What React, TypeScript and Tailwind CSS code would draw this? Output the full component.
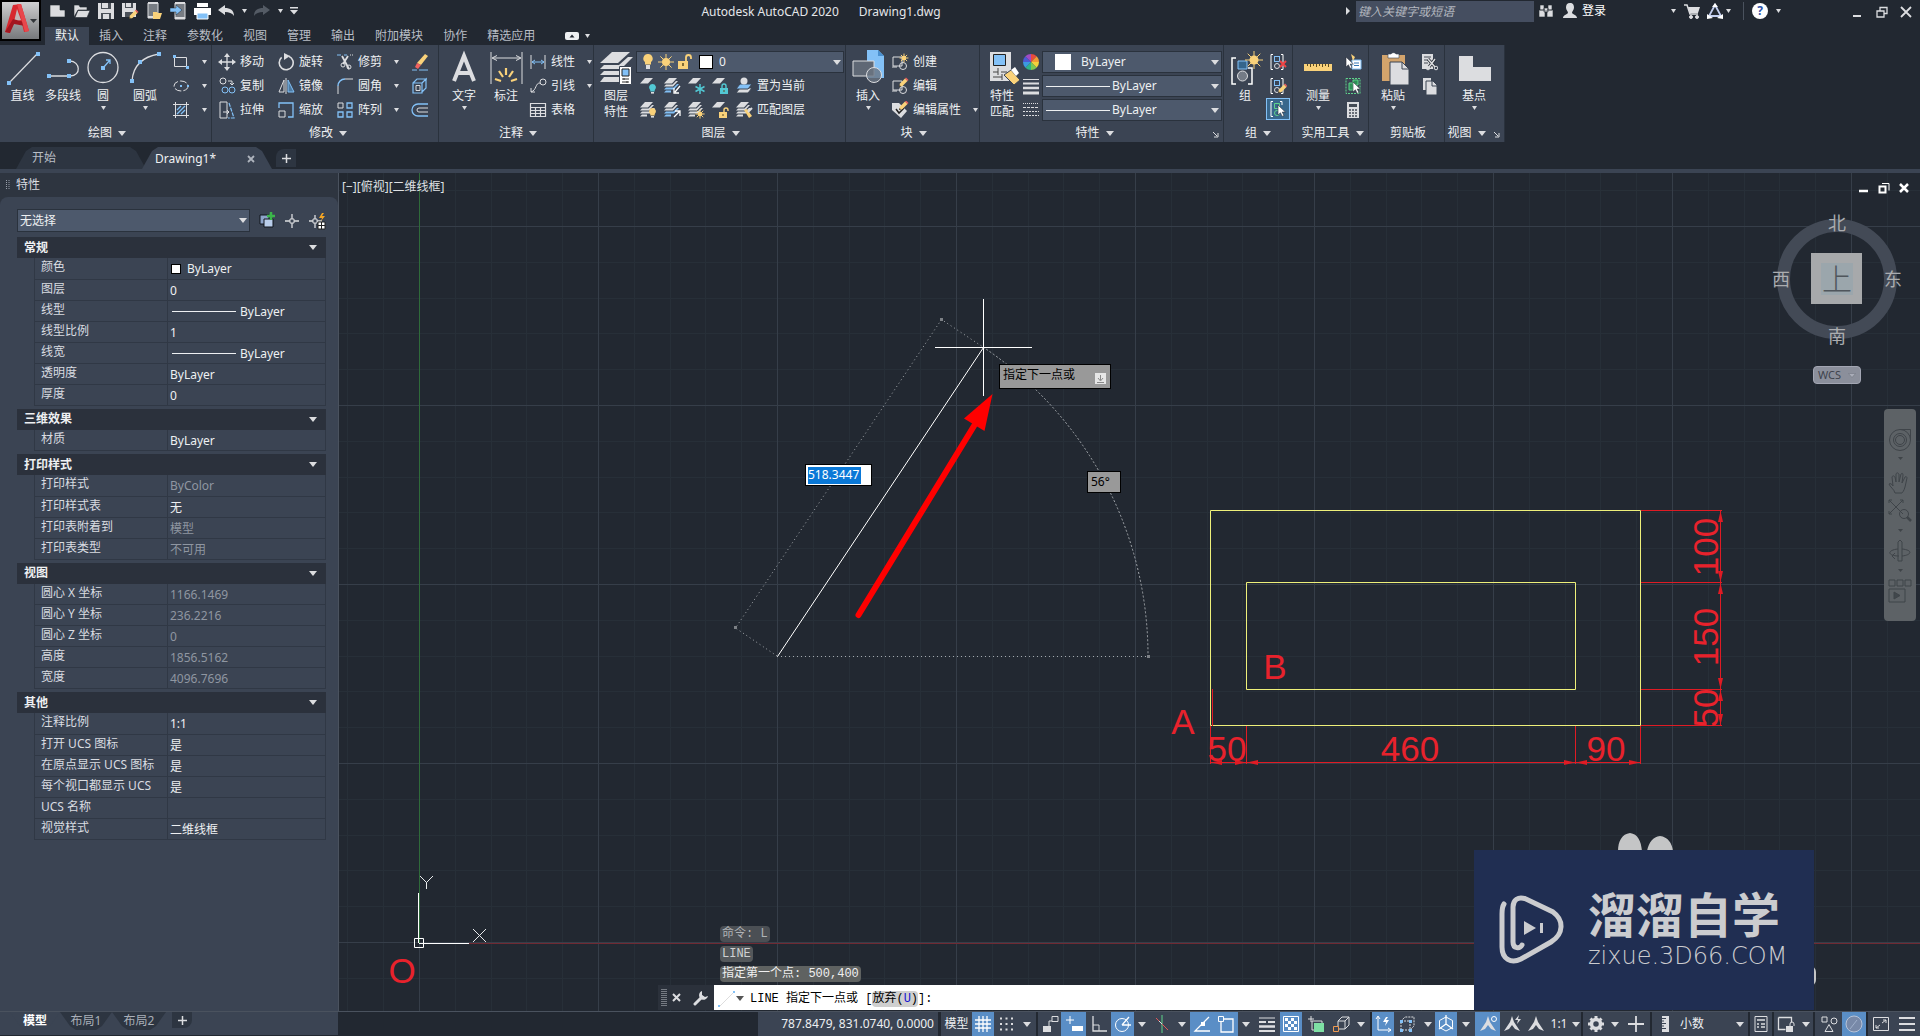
import type { ReactNode } from "react";

const W = "#dcdde0";
const B = "#83c1f7";
const Y = "#fad27a";
const G = "#5fd38b";
const BG = "#3b4453";

type IconProps = { w?: number; h?: number; children: ReactNode };

function Icon({ w = 18, h = 18, children }: IconProps) {
    return (
        <svg width={w} height={h} viewBox={`0 0 ${w} ${h}`} fill="none" stroke={W} className="shrink-0">
            {children}
        </svg>
    );
}

function Down({ small = false }: { small?: boolean }) {
    return small ? (
        <svg width="5" height="4" viewBox="0 0 5 4" className="shrink-0"><path d="M0 0h5L2.5 4z" fill={W} /></svg>
    ) : (
        <svg width="8" height="5" viewBox="0 0 8 5" className="shrink-0"><path d="M0 0h8L4 5z" fill={W} /></svg>
    );
}

/* ---------- shared icon parts ---------- */

function Sheets({ n = 3, low = W }: { n?: number; low?: string }) {
    return (
        <g stroke="none">
            <path d="M6 1h8L9 6.500H1z" fill={W} />
            {n > 1 && <path d="M1 9.500L3 7.500h6.500L13 4h2l-5 5.500z" fill={W} />}
            {n > 2 && <path d="M1 12.500l2-2h7.500L14 7h2l-5 5.500z" fill={low} />}
            {n > 2 && <path d="M1 15.500l2-2h5v2z" fill={low} />}
        </g>
    );
}

function Bulb({ x, y, c = Y }: { x: number; y: number; c?: string }) {
    return (
        <g stroke="none">
            <path d={`M${x} ${y}a3.5 3.5 0 0 1 2.2 6.2v1.3h-4.4v-1.3a3.5 3.5 0 0 1 2.2-6.2z`} fill={c} />
            <rect x={x - 1.5} y={y + 8} width="3" height="1.6" fill={W} />
        </g>
    );
}

function Sun({ x, y, r = 3, c = Y }: { x: number; y: number; r?: number; c?: string }) {
    const k = r * 2;
    const d = r * 1.4;
    return (
        <g stroke={c} strokeWidth="1">
            <circle cx={x} cy={y} r={r} fill={c} stroke="none" />
            <path d={`M${x - k} ${y}h${k * 2}M${x} ${y - k}v${k * 2}M${x - d} ${y - d}l${d * 2} ${d * 2}M${x + d} ${y - d}l${-d * 2} ${d * 2}`} />
        </g>
    );
}

function Lock({ x, y, c = Y, open = false }: { x: number; y: number; c?: string; open?: boolean }) {
    return (
        <g>
            <path d={open ? `M${x + 5} ${y}v-2a2 2 0 0 1 4 0v1` : `M${x + 2} ${y}v-2a2 2 0 0 1 4 0v2`} stroke={c} strokeWidth="1.4" />
            <rect x={x} y={y} width="8" height="6" fill={c} stroke="none" />
            <path d={`M${x + 4} ${y + 2}v2`} stroke="#5a4a20" />
        </g>
    );
}

function Pencil({ x, y }: { x: number; y: number }) {
    return (
        <g stroke="none">
            <path d={`M${x} ${y + 8}l1-3.5 5-5 2.5 2.5-5 5z`} fill={Y} />
            <path d={`M${x + 6} ${y - 0.5}l1-1 2.5 2.5-1 1z`} fill="#f0625f" />
            <path d={`M${x} ${y + 8}l.6-2 1.4 1.4z`} fill="#222" />
        </g>
    );
}

function Cursor({ x, y }: { x: number; y: number }) {
    return <path d={`M${x} ${y}v10l2.4-2.2 1.8 3.6 1.8-.9-1.8-3.4h3.2z`} fill="#fff" stroke="#2b313b" strokeWidth=".6" />;
}

function Squares({ pts }: { pts: number[][] }) {
    return <>{pts.map(([x, y]) => <rect key={`${x}-${y}`} x={x - 2} y={y - 2} width="4" height="4" fill={B} stroke="none" />)}</>;
}

/* ---------- ribbon building blocks ---------- */

function BigButton({ icon, label, arrow, className }: { icon: ReactNode; label: string[]; arrow?: boolean; className: string }) {
    return (
        <button className={`flex flex-col items-center ${className}`}>
            {icon}
            <span className="mt-0.5 flex flex-col leading-4">
                {label.map((l) => <span key={l}>{l}</span>)}
            </span>
            {arrow && <span className="mt-0.5"><Down small /></span>}
        </button>
    );
}

function Tool({ icon, label, arrow, name }: { icon: ReactNode; label?: string; arrow?: boolean; name?: string }) {
    return (
        <button className="flex h-6 items-center gap-1 whitespace-nowrap" aria-label={name}>
            {icon}
            {label}
            {arrow && <span className="ml-2"><Down small /></span>}
        </button>
    );
}

function Panel({ title, arrow = true, launcher, className, children }: { title: string; arrow?: boolean; launcher?: boolean; className: string; children: ReactNode }) {
    return (
        <section className={`flex shrink-0 flex-col border-r border-[#2a323d] bg-[#3b4453] ${className}`}>
            <div className="flex h-[77px] pt-[5px]">{children}</div>
            <button className={`relative flex h-5 items-center justify-center gap-1.5 pt-0.5 whitespace-nowrap ${launcher ? "pr-4" : ""}`}>
                {title}
                {arrow && <Down />}
                {launcher && (
                    <svg width="7" height="7" viewBox="0 0 7 7" className="absolute right-1 bottom-1" fill="none" stroke={W}><path d="M1 1l4 4M6 2v4H2" /></svg>
                )}
            </button>
        </section>
    );
}

function Combo({ name, value, before, className }: { name: string; value: string; before?: ReactNode; className: string }) {
    return (
        <div className={`flex items-center border border-[#2a323d] bg-[#4d596c] pr-0.5 ${className}`}>
            {before}
            <select aria-label={name} className="min-w-0 flex-1 appearance-none bg-transparent text-[#eef0f2] outline-none">
                <option>{value}</option>
            </select>
            <Down />
        </div>
    );
}

/* ---------- title bar ---------- */

const qat: { name: string; icon: ReactNode }[] = [
    { name: "新建", icon: <path d="M1 3h10l5 5v7H1z M11 3v5h5" fill={W} stroke="#222831" strokeWidth=".6" /> },
    { name: "打开", icon: <path d="M1 3h5l1 2h7v3H5l-4 7zM5 8.500h12l-3 7H2z" fill={W} stroke="#222831" strokeWidth=".6" /> },
    { name: "保存", icon: <><path d="M1 1h16v16H1z" fill={W} stroke="none" /><path d="M4 1h10v6H4zM4 11h10v6H4z" fill="#4a5058" stroke="none" /><path d="M5 1h6v5H5zM6 12h6v5H6z" fill={W} stroke="none" /></> },
    { name: "另存为", icon: <><path d="M1 1h14v14H1z" fill={W} stroke="none" /><path d="M4 1h8v5H4zM4 10h8v5H4z" fill="#4a5058" stroke="none" /><path d="M5 1h5v4H5z" fill={W} stroke="none" /><Pencil x={8} y={9} /></> },
    { name: "从移动设备打开", icon: <><path d="M3 1h10v15H3z" fill="#777c83" /><path d="M3 1h10M3 15h7" strokeWidth="2" /><path d="M8 10h4l1 1h4l-2 6H8z" fill={Y} stroke="none" /></> },
    { name: "保存到移动设备", icon: <><path d="M6 1h10v16H6z" fill="#777c83" /><path d="M6 1h10M6 16h10" strokeWidth="2" /><path d="M1 6h6V3l6 5-6 5v-3H1z" fill={B} stroke="#222831" strokeWidth=".5" /></> },
    { name: "打印", icon: <><path d="M4 1h11v4H4zM1 6h17v7H1z" fill="#fff" stroke="none" /><path d="M4 11h11v6H4z" fill={B} stroke="#fff" /></> },
    { name: "放弃", icon: <path d="M1 8l7-5v3c5 0 9 2 9 8-2-3-5-4-9-4v3z" fill={W} stroke="none" /> },
];

function TitleBar() {
    return (
        <header className="flex h-[45px] shrink-0">
            <button aria-label="应用程序" className="flex h-[41px] w-[41px] shrink-0 items-center border-2 border-black bg-linear-to-b from-[#cfcfd0] to-[#77797c]">
                <svg width="37" height="37" viewBox="0 0 37 37">
                    <path d="M3 30L11 3l8-1 8 27-5 1-2-8-6-2-5 5-1 6z" fill="#d7282f" />
                    <path d="M15 7l-3 13 7-2z" fill="#c2b5b6" />
                    <path d="M3 30l8-13 11 3 1 4-11-2-4 9z" fill="#a31620" />
                    <path d="M15 2l4 0 8 27-4 1z" fill="#e8474c" />
                    <path d="M28 17h7l-3.500 4z" fill="#33363a" />
                </svg>
            </button>
            <div className="flex min-w-0 flex-1 flex-col">
                <div className="flex h-[27px] pr-0.5">
                    <div className="flex h-[22px] items-center pl-[5px]">
                        {qat.map((q) => (
                            <button key={q.name} aria-label={q.name} className="flex w-6 justify-center"><Icon>{q.icon}</Icon></button>
                        ))}
                        <button aria-label="放弃列表" className="flex w-3 justify-center"><Down small /></button>
                        <button aria-label="重做" className="flex w-6 justify-center">
                            <Icon><path d="M17 8l-7-5v3C5 6 1 8 1 14c2-3 5-4 9-4v3z" fill="#545b65" stroke="none" /></Icon>
                        </button>
                        <button aria-label="重做列表" className="flex w-3 justify-center"><Down small /></button>
                        <button aria-label="自定义" className="flex w-4 justify-center">
                            <svg width="8" height="8" viewBox="0 0 8 8" fill={W}><path d="M0 0h8v1.500H0zM0 3h8L4 7.500z" /></svg>
                        </button>
                    </div>
                    <h1 className="flex h-6 flex-1 items-center justify-center gap-5 pr-1.5 text-xs text-[#e4e6e9]">
                        <span>Autodesk AutoCAD 2020</span>
                        <span>Drawing1.dwg</span>
                    </h1>
                    <div className="flex h-[22px] items-center">
                        <svg width="4" height="8" viewBox="0 0 4 8" className="mr-1.5"><path d="M0 0l4 4-4 4z" fill={W} /></svg>
                        <input aria-label="搜索" placeholder="键入关键字或短语" className="h-[21px] w-[178px] bg-[#454e60] px-0.5 text-xs italic outline-none placeholder:text-[#b3b7bf]" />
                        <button aria-label="查找" className="flex w-6 justify-center">
                            <Icon><path d="M3 3h4v5H3zM11 3h4v5h-4zM2 8h6v7H2zM10 8h6v7h-6zM7 6h4v4H7z" fill={W} stroke="#222831" strokeWidth=".6" /></Icon>
                        </button>
                        <button className="flex w-[118px] items-center text-xs text-white">
                            <span className="flex w-6 justify-center">
                                <Icon><path d="M9 1c3 0 4 2 4 4.500S11 9 11 11c1 1.500 5 2 5 5H2c0-3 4-3.500 5-5 0-2-2-3-2-5.500S6 1 9 1z" fill={W} stroke="none" /></Icon>
                            </span>
                            <span className="mr-auto">登录</span>
                            <Down small />
                        </button>
                        <button aria-label="购物车" className="ml-1 flex w-6 justify-center">
                            <Icon><path d="M1 3h3l3 9h8" strokeWidth="1.500" /><path d="M5 5h12l-2 6H7z" fill={W} stroke="none" /><circle cx="8" cy="15" r="1.500" fill={W} /><circle cx="14" cy="15" r="1.500" fill={W} /></Icon>
                        </button>
                        <button aria-label="Autodesk App Store" className="flex w-8 items-center gap-0.5 pl-0.5">
                            <Icon><path d="M9 3L3 14h12z" stroke="#c3cff0" strokeWidth="1.800" /><path d="M6 5l3-4 3 4zM1 12l6 4-6 1zM17 12l-6 4 6 1z" fill="#fff" stroke="none" /></Icon>
                            <Down small />
                        </button>
                        <span className="mr-2 ml-[7px] h-[18px] w-px bg-[#4a525e]" />
                        <button aria-label="帮助" className="flex items-center gap-2">
                            <span className="flex size-4 items-center justify-center rounded-full bg-white text-xs leading-4 font-bold text-[#2c51a8]">?</span>
                            <Down small />
                        </button>
                        <div className="ml-16 flex w-[73px] justify-between pt-0.5">
                            <button aria-label="最小化" className="flex w-6 justify-center"><Icon w={12} h={12}><path d="M2 10h8" strokeWidth="2" /></Icon></button>
                            <button aria-label="还原" className="flex w-6 justify-center"><Icon w={12} h={12}><path d="M1 5h7v6H1zM4 5V1.500h7v6H8" strokeWidth="1.300" /></Icon></button>
                            <button aria-label="关闭" className="flex w-6 justify-center"><Icon w={12} h={12}><path d="M1 1l10 10M11 1L1 11" strokeWidth="1.800" /></Icon></button>
                        </div>
                    </div>
                </div>
                <nav className="flex h-[18px] pl-1 text-xs leading-[18px] text-[#b9bec6]">
                    {["默认", "插入", "注释", "参数化", "视图", "管理", "输出", "附加模块", "协作", "精选应用"].map((t, i) => (
                        <button key={t} className={i === 0 ? "bg-[#3b4453] px-2.5 text-[#eef0f2]" : "px-2.5"}>{t}</button>
                    ))}
                    <button aria-label="最小化功能区" className="ml-5 flex items-center gap-1.5">
                        <svg width="14" height="8" viewBox="0 0 14 8"><rect width="14" height="8" rx="2" fill="#eef0f2" /><path d="M4.500 5.500h5l-2.500-3z" fill="#222831" /></svg>
                        <Down small />
                    </button>
                </nav>
            </div>
        </header>
    );
}

/* ---------- ribbon ---------- */

function DrawPanel() {
    return (
        <Panel title="绘图" className="w-[212px] pl-[3px]">
            <BigButton className="w-[39px]" label={["直线"]} icon={<Icon w={36} h={36}><path d="M4 33L32 4" strokeWidth="1.200" /><Squares pts={[[4, 33], [33, 4]]} /></Icon>} />
            <BigButton className="w-[42px]" label={["多段线"]} icon={<Icon w={36} h={36}><path d="M4 26h20M25 11c10 0 12 15 0 15" strokeWidth="1.300" /><Squares pts={[[4, 26], [24, 26], [24, 11]]} /></Icon>} />
            <BigButton className="w-[38px]" arrow label={["圆"]} icon={<Icon w={36} h={36}><circle cx="18" cy="17.500" r="15" strokeWidth="1.300" /><path d="M18 18l7-8M21 10h4v4" stroke={B} strokeWidth="1.300" /><Squares pts={[[18, 18]]} /></Icon>} />
            <BigButton className="w-[46px]" arrow label={["圆弧"]} icon={<Icon w={36} h={36}><path d="M5 31C6 17 14 7 32 4" strokeWidth="1.300" /><Squares pts={[[5, 31], [13, 12], [32, 4]]} /></Icon>} />
            <div className="ml-1">
                <Tool name="矩形" arrow icon={<Icon><path d="M2.500 4.500h12v9h-12z" /><rect x="1" y="2" width="3" height="3" fill={B} stroke="none" /><rect x="14" y="13" width="3" height="3" fill={B} stroke="none" /></Icon>} />
                <Tool name="椭圆" arrow icon={<Icon><ellipse cx="9" cy="9" rx="7" ry="5" strokeDasharray="7 2" /><rect x="8" y="8" width="2" height="2" fill={B} stroke="none" /><rect x="15" y="8" width="2" height="2" fill={B} stroke="none" /></Icon>} />
                <Tool name="图案填充" arrow icon={<Icon><path d="M3.500 1v16M14.500 1v16M1 3.500h16M1 14.500h16" /><path d="M5 9l4-4M5 13l8-8M9 13l4-4" stroke={B} strokeWidth="1.300" /></Icon>} />
            </div>
        </Panel>
    );
}

function ModifyPanel() {
    return (
        <Panel title="修改" className="w-[227px] pl-1.5">
            <div className="w-[59px]">
                <Tool label="移动" icon={<Icon><path d="M9 2v14M2 9h14" strokeWidth="1.300" /><path d="M9 0l3 4H6zM9 18l3-4H6zM0 9l4-3v6zM18 9l-4-3v6z" fill={W} stroke="none" /></Icon>} />
                <Tool label="复制" icon={<Icon><circle cx="5" cy="4" r="3" /><path d="M10 4h4v4M12 6l2 2 2-2" /><circle cx="7" cy="13" r="3" stroke={B} /><circle cx="14" cy="13" r="3" stroke={B} /></Icon>} />
                <Tool label="拉伸" icon={<Icon><path d="M2 1h7v16H2zM5 11h6M9 9l2 2-2 2" /><path d="M11 2l5 15h-6" stroke={B} strokeWidth="1.200" strokeDasharray="4 1" /></Icon>} />
            </div>
            <div className="w-[59px]">
                <Tool label="旋转" icon={<Icon><path d="M14 5A7 7 0 1 1 7 3" strokeWidth="1.600" transform="rotate(-25 9 9)" /><path d="M7 0l6 3-6 4z" fill={W} stroke="none" /></Icon>} />
                <Tool label="镜像" icon={<Icon><path d="M7 3v12H2z" /><path d="M11 3v12h6z" stroke={B} fill="#4d7ba3" /><path d="M9 1v16" /></Icon>} />
                <Tool label="缩放" icon={<Icon><path d="M2 10h6v6H2z" /><path d="M2 7V2h14v14h-5" stroke={B} strokeWidth="1.300" /></Icon>} />
            </div>
            <div className="w-[75px]">
                <Tool label="修剪" arrow icon={<Icon><path d="M1 2h4M8 2h3" stroke={B} /><path d="M14 2h3" strokeDasharray="1" /><path d="M6 3l7 13M12 3l-5 8" strokeWidth="1.800" /><circle cx="13" cy="14" r="2" /><circle cx="7" cy="12" r="2" /></Icon>} />
                <Tool label="圆角" arrow icon={<Icon><path d="M2 9c0-4 3-7 7-7" stroke={B} strokeWidth="1.500" /><path d="M2 17V9M9 2h8" /></Icon>} />
                <Tool label="阵列" arrow icon={<Icon><path d="M2 2h5v5H2z" /><path d="M11 2h5v5h-5zM2 11h5v5H2zM11 11h5v5h-5z" stroke={B} strokeWidth="1.300" /></Icon>} />
            </div>
            <div>
                <Tool name="删除" icon={<Icon><path d="M1 17h5M8 17h9" stroke={B} /><path d="M6 10l8-9 3 2-7 9z" fill={Y} stroke="none" /><path d="M6 10l4 2-3 4-3-2z" fill="#f0625f" stroke="none" /></Icon>} />
                <Tool name="分解" icon={<Icon><path d="M2 6h9v10H2zM2 6l4-4h10M11 6l4-4v9l-4 4" stroke={B} strokeWidth="1.200" /><path d="M5 8.500h4v5H5z" /></Icon>} />
                <Tool name="偏移" icon={<Icon><path d="M17 3H7a6 6 0 0 0 0 12h10" stroke={B} strokeWidth="1.300" /><path d="M17 7H8a2 2 0 0 0 0 4h9" /></Icon>} />
            </div>
        </Panel>
    );
}

function AnnotatePanel() {
    return (
        <Panel title="注释" className="w-[155px] pl-1">
            <BigButton className="w-[42px]" arrow label={["文字"]} icon={<Icon w={36} h={36}><path d="M8 31L18 6l10 25M12 23h12" strokeWidth="4" /></Icon>} />
            <BigButton className="w-[42px]" label={["标注"]} icon={<Icon w={36} h={36}><path d="M3 2v32M34 2v32M5 8h27M9 5.500L4 8l5 2.500M28 5.500L33 8l-5 2.500" /><path d="M18 18v7M11 21l4 6M25 21l-4 6M7 29l6 2M29 29l-6 2" stroke={Y} strokeWidth="2.200" /></Icon>} />
            <div className="ml-0.5">
                <Tool label="线性" arrow icon={<Icon><path d="M2 2v14M16 2v14" /><path d="M3 9h12M6 7L3 9l3 2M12 7l3 2-3 2" stroke={B} /></Icon>} />
                <Tool label="引线" arrow icon={<Icon><circle cx="14" cy="5" r="3" /><path d="M11 6c-5 0-3 7-9 9M2 11v4h4" /></Icon>} />
                <Tool label="表格" icon={<Icon><path d="M1.500 2.500h15v13h-15zM1.500 6.500h15M1.500 9.500h15M1.500 12.500h15M6.500 6v9M11.500 6v9" strokeWidth="1.200" /></Icon>} />
            </div>
        </Panel>
    );
}

const cyan = "#52c8d4";

const layerTools: { name: string; icon: ReactNode }[][] = [
    [
        { name: "关", icon: <><Sheets n={1} /><Bulb x={13.5} y={7} c={cyan} /></> },
        { name: "隔离", icon: <><Sheets low={B} /><path d="M17 9l-5 6M11 11v5h5" stroke="#fff" strokeWidth="1.300" /></> },
        { name: "冻结", icon: <><Sheets n={1} /><path d="M13 7v10M8.500 9.500l9 5M17.500 9.500l-9 5" stroke={cyan} strokeWidth="1.500" /></> },
        { name: "锁定", icon: <><Sheets n={1} /><Lock x={9} y={11} c={cyan} /></> },
    ],
    [
        { name: "打开所有图层", icon: <><Sheets /><Bulb x={13.5} y={7} /></> },
        { name: "取消隔离", icon: <><Sheets low={B} /><path d="M11 16l6-6M12 10h5v5" stroke="#fff" strokeWidth="1.300" /></> },
        { name: "解冻", icon: <><Sheets /><Sun x={13} y={13} r={2.3} /></> },
        { name: "解锁", icon: <><Sheets n={1} /><Lock x={8} y={11} open /></> },
    ],
];

function LayerPanel() {
    return (
        <Panel title="图层" className="w-[252px] pl-0.5">
            <BigButton
                className="w-10"
                label={["图层", "特性"]}
                icon={
                    <Icon w={36} h={36}>
                        <g stroke="none" fill={W}>
                            <path d="M14 2h18L20 13H2z" />
                            <path d="M2 19l4-4h15l9-8h5L23 19z" />
                            <path d="M2 25l4-4h17v4z" />
                            <path d="M2 32l4-5h17v5z" />
                        </g>
                        <path d="M21.500 16.500h12v18h-12z" fill="#fff" stroke="#3b4453" />
                        <path d="M24 19h7v7h-7z" fill={B} stroke="#222" />
                        <path d="M24 29h7M24 32h7M26 28v2M29 31v2" stroke="#333" />
                    </Icon>
                }
            />
            <div className="w-[208px]">
                <div className="flex h-6 items-center">
                    <Combo
                        name="图层"
                        value="0"
                        className="h-[22px] w-full"
                        before={
                            <span className="flex items-center pr-1.5 pl-0.5">
                                <Icon><path d="M9 1a4.500 4.500 0 0 1 3 8v2.500H6V9a4.500 4.500 0 0 1 3-8z" fill={Y} stroke="none" /><path d="M7 12h4v4H7z" fill={W} stroke="none" /></Icon>
                                <Icon><Sun x={9} y={9} r={4} /></Icon>
                                <Icon><path d="M11 8V4.500a2.500 2.500 0 0 1 5 0V6" stroke={Y} strokeWidth="1.800" /><path d="M3 8h10v8H3z" fill={Y} stroke="none" /><path d="M8 10v3" stroke="#5a4a20" strokeWidth="1.500" /></Icon>
                                <span className="ml-1.5 size-[14px] border border-black bg-white" />
                            </span>
                        }
                    />
                </div>
                {layerTools.map((row, r) => (
                    <div key={r} className="flex h-6 items-center">
                        {row.map((t) => (
                            <button key={t.name} aria-label={t.name} className="flex w-6 justify-center"><Icon>{t.icon}</Icon></button>
                        ))}
                        <span className="ml-[3px]">
                            {r === 0
                                ? <Tool label="置为当前" icon={<Icon><path d="M5 11h12l-4 5H1z" fill={W} stroke={BG} /><path d="M5 7h12l-4 5H1z" fill={B} stroke={BG} /><circle cx="9" cy="4" r="3.500" fill={W} stroke="none" /></Icon>} />
                                : <Tool label="匹配图层" icon={<Icon><Sheets /><path d="M9 9l3-1 5 7-3 2z" fill={Y} stroke="none" /><path d="M13 11l4-4" strokeWidth="2" /></Icon>} />}
                        </span>
                    </div>
                ))}
            </div>
        </Panel>
    );
}

function BlockPanel() {
    return (
        <Panel title="块" className="w-[134px] pl-0.5">
            <BigButton
                className="w-10"
                arrow
                label={["插入"]}
                icon={
                    <Icon w={36} h={36}>
                        <path d="M17 0h11l6 6v22H17z" fill={B} stroke="none" />
                        <path d="M28 0v6h6z" fill="#4a90cf" stroke="none" />
                        <path d="M3 11h21v15H3z" fill="#5f6875" />
                        <circle cx="24" cy="25" r="7.500" fill="#6a7482" fillOpacity=".8" />
                    </Icon>
                }
            />
            <div className="ml-[3px]">
                <Tool label="创建" icon={<Icon><path d="M2 4h9v9H2zM1 14h5" /><circle cx="12" cy="13" r="3.500" /><Sun x={13} y={5} r={2.2} /></Icon>} />
                <Tool label="编辑" icon={<Icon><path d="M2 4h9v9H2zM1 14h5" /><circle cx="12" cy="13" r="3.500" /><Pencil x={8} y={2} /></Icon>} />
                <Tool label="编辑属性" arrow icon={<Icon><path d="M1 2h7l8 8-6 7-9-8z" fill={W} stroke="none" /><path d="M5 8l3 4 5-5" stroke="#222" strokeWidth="1.500" /><Pencil x={8} y={1} /></Icon>} />
            </div>
        </Panel>
    );
}

function PropPanel() {
    const line = <span className="mr-0.5 ml-[3px] h-px w-16 shrink-0 bg-[#eef0f2]" />;
    return (
        <Panel title="特性" launcher className="w-[244px] pl-0.5">
            <BigButton
                className="w-10"
                label={["特性", "匹配"]}
                icon={
                    <Icon w={36} h={36}>
                        <path d="M6 2h21v29H6z" fill={W} stroke="none" />
                        <path d="M9.500 4.500h12v11h-12z" fill={B} stroke="#222" />
                        <path d="M9 22h5M17 22h6M9 27h9M14 18v7M18 24v6" stroke="#444" />
                        <path d="M20 25l7-5 9 10-6 5z" fill={Y} stroke="#3b4453" />
                        <path d="M27 20l4-3 4 6-3 3z" fill="#fff" stroke="none" />
                    </Icon>
                }
            />
            <div className="w-5">
                <Tool name="颜色" icon={
                    <svg width="18" height="18" viewBox="0 0 18 18">
                        {["#e94b3c", "#f39c34", "#f2d13c", "#7ec850", "#2fb38a", "#3c9ae0", "#4c5bd4", "#a04bc4"].map((c, i) => (
                            <path key={c} d="M9 9L9 1A8 8 0 0 1 14.660 3.340z" fill={c} transform={`rotate(${i * 45} 9 9)`} />
                        ))}
                    </svg>
                } />
                <Tool name="线宽" icon={<Icon><path d="M1 2.500h16" /><path d="M1 6.500h16" strokeWidth="2" /><path d="M1 11h16" strokeWidth="2.500" /><path d="M1 16h16" strokeWidth="3" /></Icon>} />
                <Tool name="线型" icon={<Icon><path d="M1 2.500h16" strokeDasharray="1 1" /><path d="M1 6.500h16" strokeDasharray="3 1" /><path d="M1 10.500h16M1 14.500h16" strokeDasharray="2 1" /></Icon>} />
            </div>
            <div className="flex w-[180px] flex-col gap-0.5 pt-px">
                <Combo name="对象颜色" value="ByLayer" className="h-[22px]" before={<span className="mr-2.5 ml-3 size-4 shrink-0 bg-white" />} />
                <Combo name="对象线宽" value="ByLayer" className="h-[22px]" before={line} />
                <Combo name="对象线型" value="ByLayer" className="h-[22px]" before={line} />
            </div>
        </Panel>
    );
}

function Ribbon() {
    const group = (
        <>
            <path d="M4 1.500H2v15h2M12 1.500h2v15h-2" stroke="#fff" />
            <rect x="5.500" y="3.500" width="5" height="5" stroke={B} />
            <circle cx="8" cy="13" r="2.500" />
        </>
    );
    return (
        <div className="flex h-[97px] shrink-0 text-xs text-[#eef0f2]">
            <DrawPanel />
            <ModifyPanel />
            <AnnotatePanel />
            <LayerPanel />
            <BlockPanel />
            <PropPanel />
            <Panel title="组" className="w-[69px]">
                <BigButton className="w-[42px]" label={["组"]} icon={<Icon w={36} h={36}><path d="M9 8H5v26h4M21 18h4v16h-4" stroke="#fff" strokeWidth="1.500" /><path d="M11 11h9v8h-9z" fill="#34658c" stroke={B} /><circle cx="15.500" cy="26" r="5" fill="#747b86" /><Sun x={27} y={10} r={4.5} /></Icon>} />
                <div className="flex flex-col">
                    <span className="px-[3px]"><Tool name="解除编组" icon={<Icon>{group}<path d="M11 8l6 6M17 8l-6 6" stroke="#ef4444" strokeWidth="2" /></Icon>} /></span>
                    <span className="px-[3px]"><Tool name="组编辑" icon={<Icon>{group}<Pencil x={9} y={8} /></Icon>} /></span>
                    <span className="flex h-[22px] items-center border border-[#83c1f7] bg-[#39678c] px-0.5"><Tool name="启用组选择" icon={<Icon><path d="M4 1.500H2v15h2M11 1.500h2V5" stroke="#fff" /><path d="M5.500 3.500h5v5h-5z" stroke={G} /><circle cx="8" cy="13" r="2.500" stroke={G} /><Cursor x={9} y={5} /></Icon>} /></span>
                </div>
            </Panel>
            <Panel title="实用工具" className="w-[76px] pl-1">
                <BigButton className="w-[42px]" arrow label={["测量"]} icon={<Icon w={36} h={36}><path d="M4 14h28v7H4z" fill={Y} stroke="none" /><path d="M7.500 14v2M10.500 14v3M13.500 14v2M16.500 14v3M19.500 14v2M22.500 14v3M25.500 14v2M28.500 14v3" stroke="#5a4a20" /></Icon>} />
                <div className="ml-[5px]">
                    <Tool name="快速选择" icon={<Icon><path d="M8 7h9v9H8z" fill="#fff" stroke={B} /><path d="M10 10h5M10 12.500h5" stroke="#3577b5" /><path d="M7 1l4 3-2 4z" fill={Y} stroke="none" /><Cursor x={2} y={4} /></Icon>} />
                    <Tool name="全部选择" icon={<Icon><path d="M2 1.500h14v15H2z" stroke={G} strokeDasharray="2 1" /><path d="M5 6h4v7H5zM9 3h5v5H9z" fill="#2f8f57" stroke={G} /><Cursor x={9} y={5} /></Icon>} />
                    <Tool name="计算器" icon={<Icon><path d="M3 1h12v16H3z" fill={W} stroke="none" /><path d="M5 3h8v3H5z" fill="#444b55" stroke="none" /><path d="M5 9h8M5 12h8M5 15h8" stroke="#444b55" strokeWidth="1.600" strokeDasharray="2 1" /></Icon>} />
                </div>
            </Panel>
            <Panel title="剪贴板" arrow={false} className="w-[76px] pl-[3px]">
                <BigButton className="w-[42px]" arrow label={["粘贴"]} icon={<Icon w={36} h={36}><path d="M7 5h23v26H7z" fill="#d3a46c" stroke="none" /><path d="M13 4h3a3 3 0 0 1 5 0h3v4H13z" fill="#fff" stroke={BG} strokeWidth=".6" /><path d="M15 12h12l7 7v16H15z" fill={W} stroke={BG} /><path d="M27 12v7h7" stroke={BG} /></Icon>} />
                <div className="ml-1.5">
                    <Tool name="剪切" icon={<Icon><path d="M2 1h11v15H2z" fill={W} stroke="none" /><path d="M4 4h7M4 7h5M4 10h4" stroke="#444b55" /><path d="M8 6l7 8M15 6l-6 8" stroke="#222831" strokeWidth="3" /><path d="M8 6l7 8M15 6l-6 8" strokeWidth="1.500" /><circle cx="8" cy="15" r="1.800" /><circle cx="16" cy="15" r="1.800" /></Icon>} />
                    <Tool name="复制剪裁" icon={<Icon><path d="M3 1h8v12H3z" fill={W} stroke="none" /><path d="M6 4h7l4 4v10H6z" fill={W} stroke={BG} /><path d="M12 4v5h5" stroke={BG} /></Icon>} />
                </div>
            </Panel>
            <Panel title="视图" launcher className="w-[60px]">
                <BigButton className="ml-2 w-[42px]" arrow label={["基点"]} icon={<Icon w={36} h={36}><path d="M3 6h14v11h18v14H3z" fill={W} stroke="none" /></Icon>} />
            </Panel>
        </div>
    );
}

/* ---------- drawing file tabs ---------- */

const tabShape = "[clip-path:polygon(0_100%,10px_4px,16px_0,calc(100%-16px)_0,calc(100%-10px)_4px,100%_100%)]";
const tabShapeDown = "[clip-path:polygon(0_0,10px_calc(100%-4px),16px_100%,calc(100%-16px)_100%,calc(100%-10px)_calc(100%-4px),100%_0)]";

function FileTabs() {
    return (
        <div className="flex h-[31px] shrink-0 border-b-4 border-[#3b4453] pt-[5px] pl-4 text-xs text-[#b9bec6]">
            <button className={`h-[22px] w-[130px] bg-[#2d3541] pl-4 text-left ${tabShape}`}>开始</button>
            <div className={`-ml-1 flex h-[22px] w-[130px] items-center bg-[#3b4453] pt-0.5 pr-[17px] pl-[13px] text-[#eef0f2] ${tabShape}`}>
                <button className="mr-auto">Drawing1*</button>
                <button aria-label="关闭图形"><Icon w={8} h={8}><path d="M1 1l6 6M7 1L1 7" stroke="#aeb4bd" strokeWidth="1.800" /></Icon></button>
            </div>
            <button aria-label="新图形" className="ml-1 flex h-[18px] w-5 items-center justify-center rounded-tl-lg self-center bg-[#2d3541]">
                <Icon w={9} h={9}><path d="M4.500 0v9M0 4.500h9" strokeWidth="1.500" /></Icon>
            </button>
        </div>
    );
}

/* ---------- properties palette ---------- */

type Row = { label: string; value: string; dim?: boolean; before?: "swatch" | "line" };

const sections: { title: string; rows: Row[] }[] = [
    {
        title: "常规",
        rows: [
            { label: "颜色", value: "ByLayer", before: "swatch" },
            { label: "图层", value: "0" },
            { label: "线型", value: "ByLayer", before: "line" },
            { label: "线型比例", value: "1" },
            { label: "线宽", value: "ByLayer", before: "line" },
            { label: "透明度", value: "ByLayer" },
            { label: "厚度", value: "0" },
        ],
    },
    { title: "三维效果", rows: [{ label: "材质", value: "ByLayer" }] },
    {
        title: "打印样式",
        rows: [
            { label: "打印样式", value: "ByColor", dim: true },
            { label: "打印样式表", value: "无" },
            { label: "打印表附着到", value: "模型", dim: true },
            { label: "打印表类型", value: "不可用", dim: true },
        ],
    },
    {
        title: "视图",
        rows: [
            { label: "圆心 X 坐标", value: "1166.1469", dim: true },
            { label: "圆心 Y 坐标", value: "236.2216", dim: true },
            { label: "圆心 Z 坐标", value: "0", dim: true },
            { label: "高度", value: "1856.5162", dim: true },
            { label: "宽度", value: "4096.7696", dim: true },
        ],
    },
    {
        title: "其他",
        rows: [
            { label: "注释比例", value: "1:1" },
            { label: "打开 UCS 图标", value: "是" },
            { label: "在原点显示 UCS 图标", value: "是" },
            { label: "每个视口都显示 UCS", value: "是" },
            { label: "UCS 名称", value: "" },
            { label: "视觉样式", value: "二维线框" },
        ],
    },
];

function Properties() {
    return (
        <aside className="w-[339px] shrink-0 border-r border-[#4a525e] bg-[#2e3540] text-xs text-[#d9dce1]">
            <h2 className="flex h-6 items-center gap-1.5 pl-1.5">
                <svg width="4" height="10" viewBox="0 0 4 10"><path d="M.500 0v10M3 0v10" stroke="#9aa1ac" strokeDasharray="1 1" /></svg>
                特性
            </h2>
            <div className="h-full rounded-t-lg bg-[#3b4453] pt-3 pr-3 pl-[17px]">
                <div className="mb-[5px] flex items-center">
                    <Combo name="选择对象" value="无选择" className="h-[23px] w-[238px] pl-0.5" />
                    <button aria-label="切换 PICKADD" className="ml-2"><Icon><path d="M2 3h9v9H2z" fill="#8da4c9" stroke="#10151c" /><path d="M6 7h9v8H6z" fill="#b9cdea" stroke="#10151c" /><path d="M13 0v8M9 4h8" stroke="#3bb54a" strokeWidth="2.500" /></Icon></button>
                    <button aria-label="选择对象" className="ml-[7px]"><Icon><path d="M9 2v14M2 9h14" strokeWidth="1.300" /><path d="M7 7h4v4H7z" fill={BG} /></Icon></button>
                    <button aria-label="快速选择" className="ml-[7px]"><Icon><path d="M7 3v13M1 9h13" strokeWidth="1.300" /><path d="M5 7h4v4H5z" fill={BG} /><path d="M14 1l-3 5h3l-1 3 4-5h-3l2-3z" fill="#f6a623" stroke="none" /><path d="M10 10h7v7h-7z" fill="#fff" stroke="#222" /><path d="M10 13.500h7M13.500 10v7" stroke="#222" /></Icon></button>
                </div>
                {sections.map((s) => (
                    <section key={s.title} className="mb-[3px]">
                        <button className="flex h-[21px] w-full items-center justify-between bg-[#2b313c] pr-[9px] pl-[7px] font-bold text-[#eef0f2]">
                            {s.title}
                            <Down />
                        </button>
                        <div className="pl-[17px]">
                            <table className="w-full table-fixed">
                                <tbody>
                                    {s.rows.map((r) => (
                                        <tr key={r.label} className="h-[21px] border border-t-0 border-[#303845]">
                                            <th className="w-[133px] border-r border-[#303845] pb-0.5 pl-1.5 text-left leading-4 font-normal whitespace-nowrap">{r.label}</th>
                                            <td className={`pl-0.5 leading-4 ${r.dim ? "text-[#8f96a1]" : "text-[#eef0f2]"}`}>
                                                <span className="flex items-center pt-0.5">
                                                    {r.before === "swatch" && <span className="mr-1.5 ml-px size-[10px] border border-black bg-white" />}
                                                    {r.before === "line" && <span className="mr-1 ml-0.5 h-px w-16 bg-[#eef0f2]" />}
                                                    {r.value}
                                                </span>
                                            </td>
                                        </tr>
                                    ))}
                                </tbody>
                            </table>
                        </div>
                    </section>
                ))}
            </div>
        </aside>
    );
}

/* ---------- model space ---------- */

function Drawing() {
    const right = (x: number, y: number) => `M${x} ${y}l-11 -2.500v5z`;
    const left = (x: number, y: number) => `M${x} ${y}l11 -2.500v5z`;
    const up = (x: number, y: number) => `M${x} ${y}l-2.500 11h5z`;
    const down = (x: number, y: number) => `M${x} ${y}l-2.500 -11h5z`;
    return (
        <svg className="absolute inset-0 h-full w-full" fill="none">
            <defs>
                <pattern id="major" x="80" y="53" width="179" height="179" patternUnits="userSpaceOnUse">
                    <path d="M36.500 0v179M72.500 0v179M107.500 0v179M143.500 0v179M0 36.500h179M0 72.500h179M0 107.500h179M0 143.500h179" stroke="#272f38" />
                    <path d="M.500 0v179M0 .500h179" stroke="#363e49" />
                </pattern>
            </defs>
            <rect width="100%" height="100%" fill="url(#major)" />
            <g transform="translate(-339 -173)">
                <path d="M419.500 173v770" stroke="#2f6b3a" />
                <path d="M419 943.500h3000" stroke="#702a33" />
                <path d="M418.500 893v50M419 943.500h50" stroke="#fff" />
                <path d="M414.500 938.500h9v9h-9z" stroke="#fff" />
                <path d="M420 876l6.500 6.500 6.500 -6.500M426.500 882v7M473 929l13 13M486 929l-13 13" stroke="#e8eaec" />

                <g stroke="#a4a8ad" strokeDasharray="1 3">
                    <path d="M777 656L735.500 628L941.500 319.500L983 347" />
                    <path d="M777 656.500H1148" />
                    <path d="M983 347A371 371 0 0 1 1148 656" strokeDasharray="2 2" />
                </g>
                <path d="M734 626h3v3h-3zM940 318h3v3h-3zM1147 655h3v3h-3z" fill="#7d8186" />
                <path d="M777.500 656.500L983.500 347.500" stroke="#fff" />
                <path d="M935 347.500h97M983.500 299v97" stroke="#fff" />

                <path d="M858.500 615L977 421" stroke="#f00" strokeWidth="6" strokeLinecap="round" />
                <path d="M992.500 394L964 418.500L984.500 431z" fill="#f00" />

                <path d="M1210.500 510.500h430v215h-430zM1246.500 582.500h329v107h-329z" stroke="#eef07a" />
                <g stroke="#e01b24">
                    <path d="M1641 510.500h81M1641 582.500h81M1641 689.500h81M1641 725.500h81M1720.500 510v216" />
                    <path d="M1210.500 726v38M1246.500 726v38M1575.500 726v38M1640.500 726v38M1210 762.500h431M1212.500 689v37" />
                </g>
                <path
                    fill="#e01b24"
                    d={[
                        up(1720.5, 511), down(1720.5, 582), up(1720.5, 583), down(1720.5, 689), up(1720.5, 690), down(1720.5, 725),
                        left(1211, 762.5), right(1246, 762.5), left(1247, 762.5), right(1575, 762.5), left(1576, 762.5), right(1640, 762.5),
                    ].join("")}
                />
                <g fill="#e8222c" className="font-['Liberation_Sans',Arial,sans-serif] text-[35px]" textAnchor="middle">
                    <text x="1183" y="734">A</text>
                    <text x="1275" y="679">B</text>
                    <text x="402" y="983">O</text>
                    <text x="1227" y="761">50</text>
                    <text x="1410" y="761">460</text>
                    <text x="1606" y="761">90</text>
                    <text transform="translate(1718 547) rotate(-90)">100</text>
                    <text transform="translate(1718 637) rotate(-90)">150</text>
                    <text transform="translate(1718 708) rotate(-90)">50</text>
                </g>
            </g>
        </svg>
    );
}

function ViewCube() {
    return (
        <div className="absolute top-[29px] right-4 flex w-[134px] flex-col items-center">
            <svg width="134" height="154" viewBox="0 -10 134 154">
                <circle cx="67" cy="67" r="53.500" stroke="#434a56" strokeWidth="13" fill="none" />
                <rect x="41" y="41" width="51" height="51" fill="#a7a9ab" />
                <rect x="51" y="51" width="32" height="32" fill="#9ba6ac" />
                <g className="font-['Noto_Sans_CJK_SC',sans-serif]" textAnchor="middle">
                    <text x="67" y="78" fontSize="30" fill="#50565c" className="font-light">上</text>
                    <g fill="#abadb0" fontSize="18">
                        <text x="67" y="18">北</text>
                        <text x="11" y="74">西</text>
                        <text x="123" y="74">东</text>
                        <text x="67" y="131">南</text>
                    </g>
                </g>
            </svg>
            <button className="mt-2.5 flex h-[18px] w-12 items-center justify-between rounded-sm border border-[#a3a6b3] bg-[#8b8f9b] px-1 text-[11px] text-[#3e434d]">
                WCS
                <svg width="8" height="5" viewBox="0 0 8 5"><path d="M.500.500h7L4 4.500z" fill="#a9acb8" stroke="#6c707c" strokeWidth=".5" /></svg>
            </button>
        </div>
    );
}

const navTools: { name: string; h: string; icon: ReactNode; arrow?: boolean }[] = [
    { name: "全导航控制盘", h: "h-11", arrow: true, icon: <><circle cx="12" cy="13" r="10.500" /><circle cx="12" cy="13" r="6.500" /><circle cx="12" cy="13" r="4.500" /><path d="M12 2.500h10.500V13" /></> },
    { name: "平移", h: "h-7", icon: <path d="M7 22C6 18 2 16 1 13c1-1 3 0 4 2L4 6c1-2 2-1 3 0l1 5V3c1-2 2-1 3 0v8l2-8c1-1 2-1 2 1l-1 8 3-6c1-1 2 0 2 1l-2 9c-1 4-3 6-3 6z" /> },
    { name: "范围缩放", h: "h-10", arrow: true, icon: <><path d="M1 1l14 14M15 1L1 15M1 4V1h3M12 1h3v3M1 12v3h3" /><circle cx="16" cy="15" r="4.500" /><path d="M19 18l4 4" strokeWidth="2.500" /></> },
    { name: "动态观察", h: "h-10", arrow: true, icon: <><path d="M10 3l2-2 2 2v19h-4z" /><path d="M10 10c-11 1-11 7 1 7M14 10c11 1 10 6 0 7M7 14l-3 3 3 3" /></> },
    { name: "ShowMotion", h: "h-8", icon: <><path d="M1 1h6v6H1zM9 1h6v6H9zM17 1h6v6h-6zM1 10h16v13H1z" /><path d="M6 13v7l6-3.500z" fill="#41474c" /></> },
];

function NavBar() {
    return (
        <div className="absolute top-[236px] right-1 flex h-[212px] w-8 flex-col items-center rounded-sm bg-[#5d6266] pt-[18px]">
            {navTools.map((t) => (
                <button key={t.name} aria-label={t.name} className={`flex shrink-0 flex-col items-center gap-1.5 ${t.h}`}>
                    <svg width="24" height="24" viewBox="0 0 24 24" fill="none" stroke="#3f4449">{t.icon}</svg>
                    {t.arrow && <svg width="5" height="3" viewBox="0 0 5 3"><path d="M0 0h5L2.500 3z" fill="#3f4448" /></svg>}
                </button>
            ))}
        </div>
    );
}

function CommandLine() {
    const chip = "rounded-sm px-0.5 py-px leading-[14px]";
    return (
        <div className="absolute bottom-px left-[319px] flex flex-col font-['Liberation_Mono','Noto_Sans_CJK_SC',monospace] text-xs">
            <div className="mb-[3px] ml-[62px] flex flex-col items-start gap-1">
                <span className={`bg-[#4b4f54] text-[#b1b4b7] ${chip}`}>命令: L</span>
                <span className={`bg-[#54585b] text-[#cfd1d2] ${chip}`}>LINE</span>
                <span className={`bg-[#5f6261] text-[#f0f0f0] ${chip}`}>指定第一个点: 500,400</span>
            </div>
            <div className="flex h-[25px] w-[1120px]">
                <div className="flex w-14 shrink-0 items-center bg-[#2b313b]">
                    <svg width="6" height="18" viewBox="0 0 6 18" className="ml-[3px]"><path d="M1 0v18M3 0v18M5 0v18" stroke="#c2c6cc" strokeDasharray="1 1" /></svg>
                    <button aria-label="关闭命令行" className="ml-[5px]"><Icon w={9} h={9}><path d="M1 1l7 7M8 1L1 8" strokeWidth="2" /></Icon></button>
                    <button aria-label="自定义" className="ml-3"><Icon w={16} h={16}><path d="M2 14l7-7" strokeWidth="3" strokeLinecap="round" /><path d="M9 1a4.500 4.500 0 1 0 6 5l-3 1-3-2z" fill={W} stroke="none" /></Icon></button>
                </div>
                <label className="flex flex-1 items-center bg-white pt-0.5 text-black">
                    <svg width="18" height="18" viewBox="0 0 18 18" className="ml-1"><path d="M2 16L16 2" stroke="#ddd" /><path d="M0 15h2v2H0zM15 1h2v2h-2z" fill={B} /></svg>
                    <svg width="8" height="5" viewBox="0 0 8 5" className="mr-1.5"><path d="M0 0h8L4 5z" fill="#555" /></svg>
                    <span>LINE 指定下一点或 [</span>
                    <span className="rounded-sm bg-[#cfcfcf]">放弃(<span className="text-[#1414d2]">U</span>)</span>
                    <span>]:</span>
                    <input aria-label="命令" className="min-w-0 flex-1 bg-transparent pl-1 outline-none" />
                </label>
            </div>
        </div>
    );
}

function Watermark() {
    return (
        <div className="absolute right-[106px] bottom-px h-40 w-[340px]">
            <svg width="60" height="18" viewBox="0 0 60 18" className="absolute -top-[17px] left-36" fill="#c4c5c6">
                <path d="M0 18C0 8 4 1 12 0c8 1 11 8 12 18zM29 18C31 9 35 4 42 3c8 1 12 7 13 15z" />
            </svg>
            <span className="absolute -right-0.5 bottom-6 h-5 w-2 rounded-r-md bg-[#c4c5c6]" />
            <div className="relative flex h-full w-full items-center bg-[#202e52] pl-6 text-[#cbcccf]">
                <svg width="68" height="70" viewBox="0 0 68 70" fill="none" stroke="#cbcccf" strokeWidth="5" strokeLinecap="round">
                    <path d="M6 9C4 12 4 15 4 19V52C4 64 13 69 23 64L53 47C66 39 66 25 55 17L28 4C20 1 15 5 15 12V47C15 54 22 54 24 50" />
                    <path d="M26 26l12 7-12 7z" fill="#cbcccf" stroke="none" />
                    <path d="M43.500 28v10" strokeWidth="3" strokeLinecap="butt" />
                </svg>
                <div className="ml-[22px] pb-2 whitespace-nowrap">
                    <p className="font-['Noto_Sans_CJK_SC',sans-serif] text-5xl leading-[60px] font-bold">溜溜自学</p>
                    <p className="font-['DejaVu_Sans',sans-serif] text-2xl leading-7 font-extralight">zixue.3D66.COM</p>
                </div>
            </div>
        </div>
    );
}

function Canvas() {
    return (
        <main className="relative min-w-0 flex-1 overflow-hidden bg-[#222831] text-xs">
            <Drawing />
            <div className="absolute top-1.5 left-[3px] flex text-[#dfe1e4]">
                <button>[−]</button>
                <button>[俯视]</button>
                <button>[二维线框]</button>
            </div>
            <div className="absolute top-[9px] right-2.5 flex gap-2">
                <button aria-label="最小化"><Icon w={12} h={12}><path d="M1 9h9" stroke="#fff" strokeWidth="2.500" /></Icon></button>
                <button aria-label="还原"><Icon w={12} h={12}><path d="M1.500 4.500h6v6h-6z" stroke="#fff" strokeWidth="2" /><path d="M4 1.500h7v7" stroke="#fff" /></Icon></button>
                <button aria-label="关闭"><Icon w={12} h={12}><path d="M2 2l8 8M10 2l-8 8" stroke="#fff" strokeWidth="2.500" /></Icon></button>
            </div>

            <div className="absolute top-[191px] left-[660px] flex h-[25px] w-28 items-center justify-between border border-black bg-[#999] pr-1 pb-1 pl-[3px] text-black">
                指定下一点或
                <svg width="11" height="11" viewBox="0 0 11 11" className="mt-2"><path d="M0 0h11v11H0z" fill="#e6e6e6" /><path d="M5.500 2v5M3 5l2.500 3L8 5M2 9.500h7" stroke="#888" fill="none" /></svg>
            </div>
            <div className="absolute top-[291px] left-[466px] flex h-[22px] w-[67px] items-center border border-black bg-white pl-0.5">
                <input aria-label="长度" defaultValue="518.3447" className="h-[17px] w-[53px] bg-[#0a78d7] pb-px text-white outline-none" />
            </div>
            <div className="absolute top-[298px] left-[748px] flex h-[22px] w-[34px] items-center border border-black bg-[#999] pl-[3px] text-black">56°</div>

            <ViewCube />
            <NavBar />
            <CommandLine />
            <Watermark />
        </main>
    );
}

/* ---------- status bar ---------- */

type Cell = { name: string; w: string; on?: boolean; icon?: ReactNode; text?: string; cut?: boolean };

const arrow = (name: string, w: string): Cell => ({ name, w });
const person = <path d="M9 1l2 6 6 9-5-2-3-4-3 4-5 2 6-9z" fill={W} stroke="none" />;

const cells: Cell[] = [
    { name: "模型空间", w: "w-[31px]", text: "模型" },
    { name: "栅格", w: "w-[22px]", on: true, icon: <path d="M1 5h16M1 9h16M1 13h16M5 1v16M9 1v16M13 1v16" stroke="#fff" strokeWidth="1.300" /> },
    { name: "捕捉", w: "w-[24px]", icon: <path d="M3 3.500h13M3 9h13M3 14.500h13" strokeWidth="2" strokeDasharray="2 3.500" /> },
    arrow("捕捉间距", "w-[18px]"),
    { name: "推断约束", w: "w-[25px]", cut: true, icon: <><path d="M11 1.500h6v5h-6zM11 6H8v5" /><path d="M2 11h8v6H2z" fill={W} stroke="none" /></> },
    { name: "动态输入", w: "w-[25px]", on: true, icon: <><path d="M5 1v8M1 5h8" stroke="#fff" /><path d="M7 11h11v5H7z" fill="#fff" stroke="none" /></> },
    { name: "正交", w: "w-[25px]", icon: <><path d="M3 1v15h14" strokeWidth="1.300" /><path d="M3 10h6v6" /></> },
    { name: "极轴追踪", w: "w-[23px]", on: true, icon: <><circle cx="8" cy="10" r="6.500" stroke="#fff" /><path d="M8 10h9M8 10l7-8" stroke="#fff" strokeWidth="1.300" /></> },
    arrow("极轴设置", "w-[16px]"),
    { name: "等轴测草图", w: "w-[24px]", icon: <><path d="M9 0v18" stroke={G} /><path d="M3 3l12 12" stroke="#e0585a" /><path d="M9 9l-3-3" /></> },
    arrow("等轴测设置", "w-[16px]"),
    { name: "对象捕捉追踪", w: "w-[24px]", on: true, icon: <><path d="M16 2L2 16h15" stroke="#fff" strokeWidth="1.300" /><path d="M8 7h4v4H8z" fill="#fff" stroke="none" /></> },
    { name: "对象捕捉", w: "w-[24px]", on: true, icon: <><path d="M4 4h12v13H4z" stroke="#fff" strokeWidth="1.300" /><path d="M1.500 1.500h5v5h-5z" fill="#5a8ec6" stroke="#fff" /></> },
    arrow("捕捉设置", "w-[16px]"),
    { name: "线宽", w: "w-[26px]", icon: <><path d="M1 3h16" /><path d="M1 7h7M10 7h7" strokeWidth="2" /><path d="M1 11.500h16" strokeWidth="2.500" /><path d="M1 16h16" strokeWidth="2" /></> },
    { name: "透明度", w: "w-[22px]", on: true, icon: <><path d="M1.500 1.500h15v15h-15z" stroke="#fff" /><path d="M3 4.500h12M3 10.500h12" stroke="#fff" strokeWidth="3" strokeDasharray="3" /><path d="M6 7.500h10M6 13.500h10" stroke="#fff" strokeWidth="3" strokeDasharray="3" /></> },
    { name: "选择循环", w: "w-[28px]", icon: <><path d="M4 1v6M1 4h6" /><path d="M5 6h10v9H5z" stroke={W} /><path d="M7 8h10v9H7z" fill="#7ee0a4" stroke="none" /></> },
    { name: "三维对象捕捉", w: "w-[22px]", icon: <><path d="M6 6h7v8H6zM6 6l4-4h7v8l-4 4M13 6l4-4" /><path d="M1.500 11.500h5v5h-5z" stroke="#ef9a52" fill={BG} /></> },
    arrow("三维捕捉设置", "w-[18px]"),
    { name: "动态 UCS", w: "w-[24px]", on: true, cut: true, icon: <><path d="M4 2v13h13M2 4l2-3 2 3M14 13l3 2-3 2" stroke="#fff" /><path d="M12 2l-3 5h3l-1 4 4-6h-3l2-3z" fill="#fff" stroke="none" /></> },
    { name: "选择过滤", w: "w-[26px]", icon: <><path d="M3 6h9v9H3zM3 6l4-4h9v9l-4 4" strokeDasharray="2 1" /><rect x="2" y="5" width="3" height="3" fill={B} stroke="none" /><rect x="11" y="5" width="3" height="3" fill={B} stroke="none" /><rect x="2" y="14" width="3" height="3" fill={B} stroke="none" /><rect x="11" y="14" width="3" height="3" fill={B} stroke="none" /></> },
    arrow("过滤设置", "w-[15px]"),
    { name: "小控件", w: "w-[22px]", on: true, icon: <><path d="M9 2l6.500 3.500v7L9 16l-6.500-3.500v-7z" stroke="#fff" /><path d="M9 0v9M9 9l-7 5M9 9l7 5" stroke="#fff" strokeWidth="1.300" /></> },
    arrow("小控件设置", "w-[18px]"),
    { name: "注释可见性", w: "w-[25px]", on: true, icon: <>{person}<circle cx="15" cy="4" r="2.500" stroke="#fff" /></> },
    { name: "自动缩放", w: "w-[24px]", icon: <>{person}<path d="M16 0l-4 5h3l-1 4 4-5h-3z" fill={W} stroke="none" /></> },
    { name: "注释比例", w: "w-[24px]", icon: person },
    { name: "比例", w: "w-[22px]", text: "1:1" },
    arrow("比例列表", "w-[11px]"),
    { name: "切换工作空间", w: "w-[27px]", cut: true, icon: <><circle cx="9" cy="9" r="4.500" strokeWidth="3.500" /><path d="M9 1v3M9 14v3M1 9h3M14 9h3M3.500 3.500l2 2M12.500 12.500l2 2M14.500 3.500l-2 2M5.500 12.500l-2 2" strokeWidth="3" /></> },
    arrow("工作空间列表", "w-[14px]"),
    { name: "注释监视器", w: "w-[28px]", icon: <path d="M9 1v16M1 9h16" strokeWidth="1.800" /> },
    { name: "单位", w: "w-[27px]", cut: true, icon: <><path d="M6 1h7v16H6z" fill={W} stroke="none" /><path d="M6 3.500h4M6 6h2M6 8.500h4M6 11h2M6 13.500h4" stroke={BG} /></> },
];

const tailCells: Cell[] = [
    { name: "快捷特性", w: "w-[24px]", cut: true, icon: <><path d="M3 1.500h12v15H3z" /><path d="M5 5h8M5 9h2M9 9h4M5 12h2M9 12h4" strokeWidth="1.300" /></> },
    { name: "锁定用户界面", w: "w-[26px]", cut: true, icon: <><path d="M1.500 2.500h13v5M1.500 2.500v12h7" strokeWidth="1.300" /><path d="M13 11V9a2 2 0 0 1 4 0v2" /><path d="M9 11h7v6H9z" fill={W} stroke="none" /></> },
    arrow("锁定列表", "w-[15px]"),
    { name: "隔离对象", w: "w-[29px]", cut: true, icon: <><path d="M2 2h5v5H2zM9 9.500l4 7H5z" /><circle cx="14" cy="6" r="3" /></> },
    { name: "图形性能", w: "w-[24px]", on: true, icon: <><circle cx="9" cy="9" r="8" fill="#7889a8" stroke="#b7c3d8" /><path d="M5 14l7-9" stroke="#9fb0cb" /></> },
    { name: "全屏显示", w: "w-[28px]", cut: true, icon: <><path d="M1.500 2.500h15v13h-15z" /><path d="M10 8l4-3M11 5h3v3M8 10l-4 3M4 10v3h3" /></> },
    { name: "自定义", w: "w-[26px]", icon: <path d="M1 3h16M1 9h16M1 15h16" strokeWidth="2" /> },
];

function StatusCell({ c }: { c: Cell }) {
    return (
        <button
            aria-label={c.text ? undefined : c.name}
            className={`flex h-6 shrink-0 items-center justify-center ${c.w} ${c.on ? "bg-[#5a8ec6]" : "bg-[#3b4453]"} ${c.cut ? "border-l-2 border-[#222831]" : ""}`}
        >
            {c.text}
            {c.icon && <Icon>{c.icon}</Icon>}
            {!c.icon && !c.text && <Down />}
        </button>
    );
}

function StatusBar() {
    return (
        <footer className="flex h-[25px] shrink-0 border-t border-[#4a525e] text-xs whitespace-nowrap text-[#eef0f2]">
            <nav className="flex pl-2.5 text-[#a9afb8]">
                <button className={`h-[18px] w-[50px] bg-[#3b4453] leading-4 font-bold text-white ${tabShapeDown}`}>模型</button>
                <button className={`h-[18px] w-[52px] bg-[#2d3541] leading-4 ${tabShapeDown}`}>布局1</button>
                <button className={`h-[18px] w-[54px] bg-[#2d3541] leading-4 ${tabShapeDown}`}>布局2</button>
                <button aria-label="新建布局" className="ml-1.5 flex h-4 w-5 items-center justify-center rounded-br-lg bg-[#2d3541]">
                    <Icon w={9} h={9}><path d="M4.500 0v9M0 4.500h9" strokeWidth="1.500" /></Icon>
                </button>
            </nav>
            <button className="mr-[3px] ml-auto h-6 w-[180px] bg-[#3b4453] pr-1 text-right">787.8479, 831.0740, 0.0000</button>
            {cells.map((c) => <StatusCell key={c.name} c={c} />)}
            <span className="flex h-6 w-[71px] shrink-0 items-center bg-[#3b4453] pr-1 pl-[3px]">
                <select aria-label="图形单位" className="flex-1 appearance-none bg-transparent outline-none"><option>小数</option></select>
                <Down />
            </span>
            {tailCells.map((c) => <StatusCell key={c.name} c={c} />)}
        </footer>
    );
}

export default function App() {
    return (
        <div className="flex h-screen flex-col overflow-hidden bg-[#222831] font-['Noto_Sans','Noto_Sans_CJK_SC',sans-serif]">
            <TitleBar />
            <Ribbon />
            <FileTabs />
            <div className="flex min-h-0 flex-1">
                <Properties />
                <Canvas />
            </div>
            <StatusBar />
        </div>
    );
}
